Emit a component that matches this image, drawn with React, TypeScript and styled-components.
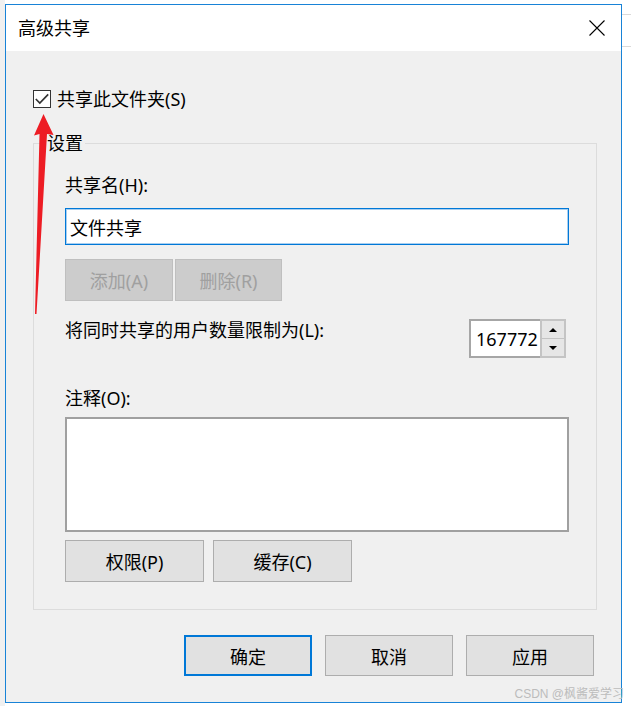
import React from "react";
import styled, { createGlobalStyle } from "styled-components";

const GlobalStyle = createGlobalStyle`
  html, body { margin: 0; padding: 0; }
  body {
    background: linear-gradient(to right, #f0f0f0 5px, #ffffff 5px);
    font-family: "Noto Sans", "Noto Sans CJK SC", sans-serif;
    color: #000;
  }
  * { box-sizing: border-box; }
`;

const Page = styled.div`
  position: relative;
  display: flex;
  align-items: flex-start;
  width: 631px;
  height: 706px;
  padding: 4px 0 0 5px;
  overflow: hidden;
`;

const Backdrop = styled.div`
  flex: 1;
  margin-top: 10px;
  height: 33px;
  border-top: 1px solid #dadada;
  border-bottom: 1px solid #dadada;
`;

const Window = styled.div`
  width: 617px;
  height: 699px;
  border: 1px solid #1883d7;
  background: #f0f0f0;
  display: flex;
  flex-direction: column;
`;

const TitleBar = styled.div`
  height: 46px;
  background: #ffffff;
  display: flex;
  align-items: center;
  justify-content: space-between;
  padding: 0 16px 0 12px;
`;

const Title = styled.span`
  font-size: 18px;
  line-height: 22px;
`;

const Body = styled.div`
  flex: 1;
  display: flex;
  flex-direction: column;
  padding: 39px 24px 0 27px;
`;

const CheckRow = styled.label`
  display: flex;
  align-items: center;
  gap: 6px;
  height: 18px;
  font-size: 18px;
  line-height: 20px;
`;

const CheckBox = styled.span`
  width: 18px;
  height: 18px;
  border: 1px solid #333333;
  background: #ffffff;
  display: flex;
  align-items: center;
  justify-content: center;
`;

const Group = styled.fieldset`
  margin: 25px 0 0;
  padding: 0;
  border: 1px solid #dcdcdc;
  min-inline-size: 0;
`;

const Legend = styled.legend`
  margin-left: 11px;
  padding: 0 2px;
  font-size: 18px;
  line-height: 20px;
`;

const GroupBody = styled.div`
  display: flex;
  flex-direction: column;
  padding: 22px 27px 27px 31px;
`;

const FieldLabel = styled.div<{ $gap?: number }>`
  font-size: 18px;
  line-height: 20px;
  margin-top: ${(p) => p.$gap ?? 0}px;
  white-space: nowrap;
`;

const TextInput = styled.input`
  margin-top: 13px;
  height: 37px;
  width: 100%;
  border: 1px solid #0078d7;
  box-shadow: inset 0 0 0 1px #a9cff0;
  background: #ffffff;
  padding: 0 0 0 4px;
  font-family: inherit;
  font-size: 18px;
  color: #000;
  outline: none;
`;

const ButtonRow = styled.div<{ $gap: number; $top: number }>`
  display: flex;
  gap: ${(p) => p.$gap}px;
  margin-top: ${(p) => p.$top}px;
`;

const Button = styled.button<{ $w: number; $h?: number; $default?: boolean }>`
  width: ${(p) => p.$w}px;
  height: ${(p) => p.$h ?? 42}px;
  background: #e1e1e1;
  border: ${(p) => (p.$default ? "2px solid #0078d7" : "1px solid #adadad")};
  font-family: inherit;
  font-size: 18px;
  color: #000;
  padding: 0;
  &:disabled {
    background: #cccccc;
    border-color: #bfbfbf;
    color: #a0a0a0;
  }
`;

const LimitRow = styled.div`
  display: flex;
  justify-content: space-between;
  align-items: flex-start;
  margin-top: 18px;
`;

const LimitLabel = styled.div`
  font-size: 18px;
  line-height: 20px;
  margin-top: 1px;
  white-space: nowrap;
`;

const Spin = styled.div`
  display: flex;
  height: 39px;
  margin-right: 3px;
`;

const SpinInput = styled.input`
  width: 71px;
  height: 39px;
  border: 2px solid #a6a6a6;
  border-right: none;
  background: #ffffff;
  padding: 0 0 0 5px;
  font-family: inherit;
  font-size: 18px;
  color: #000;
  outline: none;
`;

const SpinButtons = styled.div`
  width: 26px;
  display: flex;
  flex-direction: column;
  border: 2px solid #c4c4c4;
  background: #c4c4c4;
  gap: 1px;
`;

const SpinButton = styled.div`
  flex: 1;
  background: #e6e6e6;
  display: flex;
  align-items: center;
  justify-content: center;
`;

const Arrow = styled.span<{ $up?: boolean }>`
  width: 0;
  height: 0;
  border-left: 4px solid transparent;
  border-right: 4px solid transparent;
  ${(p) => (p.$up ? "border-bottom: 4px solid #000;" : "border-top: 4px solid #000;")}
`;

const Comment = styled.textarea`
  margin-top: 9px;
  height: 115px;
  width: 100%;
  resize: none;
  border: 2px solid #a0a0a0;
  background: #ffffff;
  outline: none;
  font-family: inherit;
  font-size: 18px;
`;

const BottomBar = styled.div`
  display: flex;
  justify-content: flex-end;
  gap: 13px;
  margin: 25px 3px 0 0;
`;

const Watermark = styled.div`
  position: absolute;
  right: 7px;
  top: 686px;
  font-size: 12px;
  line-height: 16px;
  color: #bcbcbc;
  white-space: nowrap;
  font-family: "Liberation Sans", "Noto Sans CJK SC", sans-serif;
`;

const Annotation = styled.svg`
  position: absolute;
  left: 0;
  top: 0;
  pointer-events: none;
`;

export default function App() {
  return (
    <>
      <GlobalStyle />
      <Page>
        <Window>
          <TitleBar>
            <Title>高级共享</Title>
            <svg width="16" height="16" viewBox="0 0 16 16">
              <path d="M0.5 0.5 L15.5 15.5 M15.5 0.5 L0.5 15.5" stroke="#000" strokeWidth="1.1" fill="none" />
            </svg>
          </TitleBar>
          <Body>
            <CheckRow>
              <CheckBox>
                <svg width="16" height="16" viewBox="0 0 16 16">
                  <path d="M1.8 8 L5.8 12 L14.2 3.4" stroke="#333" strokeWidth="1.7" fill="none" />
                </svg>
              </CheckBox>
              共享此文件夹(S)
            </CheckRow>
            <Group>
              <Legend>设置</Legend>
              <GroupBody>
                <FieldLabel>共享名(H):</FieldLabel>
                <TextInput defaultValue="文件共享" readOnly />
                <ButtonRow $gap={2} $top={14}>
                  <Button $w={108} disabled>添加(A)</Button>
                  <Button $w={107} disabled>删除(R)</Button>
                </ButtonRow>
                <LimitRow>
                  <LimitLabel>将同时共享的用户数量限制为(L):</LimitLabel>
                  <Spin>
                    <SpinInput defaultValue="167772" readOnly />
                    <SpinButtons>
                      <SpinButton><Arrow $up /></SpinButton>
                      <SpinButton><Arrow /></SpinButton>
                    </SpinButtons>
                  </Spin>
                </LimitRow>
                <FieldLabel $gap={30}>注释(O):</FieldLabel>
                <Comment readOnly />
                <ButtonRow $gap={9} $top={8}>
                  <Button $w={139}>权限(P)</Button>
                  <Button $w={139}>缓存(C)</Button>
                </ButtonRow>
              </GroupBody>
            </Group>
            <BottomBar>
              <Button $w={128} $h={41} $default>确定</Button>
              <Button $w={128} $h={41}>取消</Button>
              <Button $w={128} $h={41}>应用</Button>
            </BottomBar>
          </Body>
        </Window>
        <Backdrop />
        <Watermark>CSDN @枫酱爱学习</Watermark>
        <Annotation width="60" height="320" viewBox="0 0 60 320">
          <polygon
            points="43.5,114 53.5,135 47,134 36.5,314 35,314 39.5,134 34,135.5"
            fill="#ed1c24"
          />
        </Annotation>
      </Page>
    </>
  );
}
